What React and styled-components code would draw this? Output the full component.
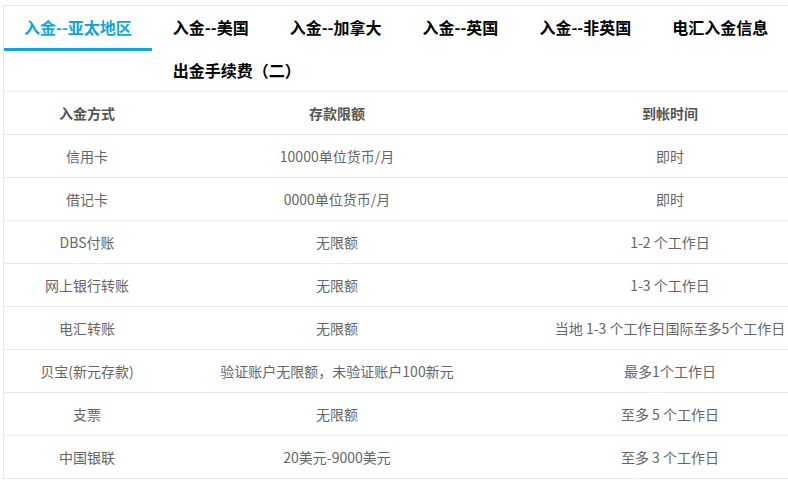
import React from "react";
import styled, { createGlobalStyle } from "styled-components";

const Global = createGlobalStyle`
  html, body { margin: 0; padding: 0; background: #fff; }
  body { font-family: "Noto Sans CJK SC", "Noto Sans", sans-serif; }
  * { box-sizing: border-box; }
`;

const Page = styled.div`
  width: 788px;
  height: 480px;
  overflow: hidden;
  padding: 5px 0 0 3px;
`;

const Panel = styled.div`
  width: 900px;
  border-top: 1px solid #e8e8e8;
  border-left: 1px solid #e8e8e8;
`;

const TabList = styled.ul`
  display: flow-root;
  list-style: none;
  margin: 0;
  padding: 0;
  height: 85px;
  overflow: hidden;
`;

const Tab = styled.li`
  float: left;
  height: ${(p) => (p.$active ? 45 : 43)}px;
  line-height: 42px;
  padding: 0 20px;
  margin-right: 1px;
  font-size: 16px;
  font-weight: 700;
  color: ${(p) => (p.$active ? "#0ea5e1" : "#000")};
  border-bottom: ${(p) => (p.$active ? "3px solid #0ea5e1" : "1px solid transparent")};
  white-space: nowrap;
  cursor: pointer;
`;

const Table = styled.table`
  border-collapse: collapse;
  table-layout: fixed;
  width: 832px;
  border-top: 1px solid #e8e8e8;
`;

const Row = styled.tr`
  border-bottom: 1px solid #e8e8e8;
`;

const Cell = styled.td`
  height: 43px;
  padding: 0;
  text-align: center;
  vertical-align: middle;
  font-size: 14px;
  color: ${(p) => (p.$head ? "#555" : "#666")};
  font-weight: ${(p) => (p.$head ? 700 : 400)};
  white-space: nowrap;
`;

const tabs = [
  "入金--亚太地区",
  "入金--美国",
  "入金--加拿大",
  "入金--英国",
  "入金--非英国",
  "电汇入金信息",
  "出金手续费（二）",
];

const rows = [
  ["信用卡", "10000单位货币/月", "即时"],
  ["借记卡", "0000单位货币/月", "即时"],
  ["DBS付账", "无限额", "1-2 个工作日"],
  ["网上银行转账", "无限额", "1-3 个工作日"],
  ["电汇转账", "无限额", "当地 1-3 个工作日国际至多5个工作日"],
  ["贝宝(新元存款)", "验证账户无限额，未验证账户100新元", "最多1个工作日"],
  ["支票", "无限额", "至多 5 个工作日"],
  ["中国银联", "20美元-9000美元", "至多 3 个工作日"],
];

export default function App() {
  return (
    <>
      <Global />
      <Page>
        <Panel>
          <TabList>
            {tabs.map((t, i) => (
              <Tab key={t} $active={i === 0}>
                {t}
              </Tab>
            ))}
          </TabList>
          <Table>
            <colgroup>
              <col style={{ width: 166 }} />
              <col style={{ width: 334 }} />
              <col style={{ width: 332 }} />
            </colgroup>
            <tbody>
              <Row>
                <Cell $head>入金方式</Cell>
                <Cell $head>存款限额</Cell>
                <Cell $head>到帐时间</Cell>
              </Row>
              {rows.map((r) => (
                <Row key={r[0]}>
                  {r.map((c, j) => (
                    <Cell key={j}>{c}</Cell>
                  ))}
                </Row>
              ))}
            </tbody>
          </Table>
        </Panel>
      </Page>
    </>
  );
}
